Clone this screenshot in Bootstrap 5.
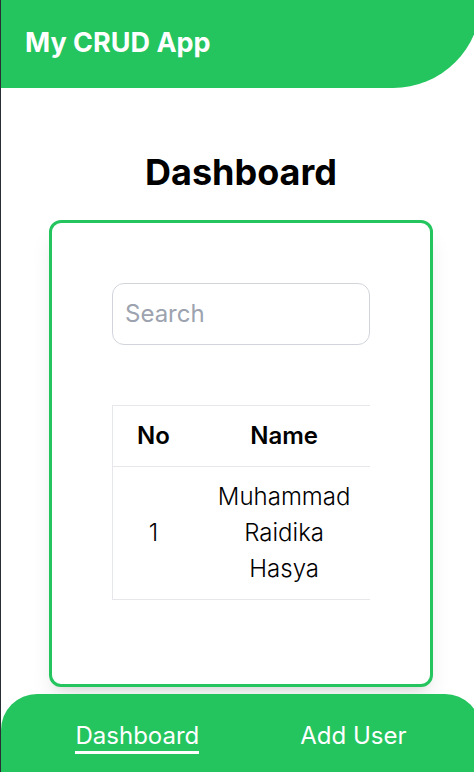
<!DOCTYPE html>
<html lang="en">
<head>
<meta charset="utf-8">
<meta name="viewport" content="width=device-width, initial-scale=1">
<title>My CRUD App</title>
<link href="https://cdn.jsdelivr.net/npm/bootstrap@5.3.0/dist/css/bootstrap.min.css" rel="stylesheet">
<style>
  :root { --brand: #24c55f; }
  body {
    font-family: Inter, "Liberation Sans", sans-serif;
    font-size: 24px;
    line-height: 36px;
    font-weight: 400;
    color: #000;
    background: #fff;
    border-left: 1px solid #282e33;
  }
  /* The shell bleeds slightly past the right edge of the window */
  .shell { margin-right: -7px; }
  .top-bar {
    background: var(--brand);
    padding: 22px 24px 24px;
    border-bottom-right-radius: 88px;
  }
  .brand-name { font-size: 27px; line-height: 42px; font-weight: 700; }
  .content { padding: 64px 48px 7px; }
  .page-title { font-size: 36px; line-height: 40px; font-weight: 700; margin-bottom: 28px; }
  .panel {
    border: 3px solid var(--brand);
    border-radius: 12px;
    padding: 60px 60px 84px;
    background: #fff;
    box-shadow: 0 15px 23px -5px rgba(0, 0, 0, .1), 0 6px 9px -6px rgba(0, 0, 0, .1);
  }
  .search-box {
    font-size: 24px;
    line-height: 36px;
    font-weight: 400;
    padding: 12px;
    border: 1px solid #d1d5db;
    border-radius: 12px;
    margin-bottom: 60px;
  }
  .search-box::placeholder { color: #9ca3af; }
  .users { border-collapse: collapse; border: 1px solid #e5e7eb; }
  .users th, .users td { padding: 12px 24px; }
  .users td { font-weight: 300; }
  .users tr { border-bottom: 1px solid #e5e7eb; }
  .users th { font-weight: 600; }
  .users .name-cell { width: 180px; }
  .bottom-bar {
    background: var(--brand);
    border-radius: 36px 36px 0 0;
    padding: 27px 24px 18px;
  }
  .bottom-bar a { border-bottom: 3px solid transparent; line-height: 30px; }
  .bottom-bar a.active { border-color: #fff; }
</style>
</head>
<body class="overflow-x-hidden min-vh-100">
<div class="shell d-flex flex-column min-vh-100">
  <header class="top-bar text-white">
    <div class="brand-name">My CRUD App</div>
  </header>
  <main class="content flex-grow-1">
    <h1 class="page-title text-center">Dashboard</h1>
    <section class="panel">
      <input type="search" class="search-box form-control" placeholder="Search" aria-label="Search">
      <div class="overflow-hidden">
        <table class="users text-center">
          <thead>
            <tr><th scope="col">No</th><th scope="col" class="name-cell">Name</th></tr>
          </thead>
          <tbody>
            <tr><td>1</td><td class="name-cell">Muhammad Raidika Hasya</td></tr>
          </tbody>
        </table>
      </div>
    </section>
  </main>
  <nav class="bottom-bar sticky-bottom d-flex justify-content-around" aria-label="Main">
    <a href="#dashboard" class="active text-white text-decoration-none" aria-current="page">Dashboard</a>
    <a href="#add-user" class="text-white text-decoration-none">Add User</a>
  </nav>
</div>
<script src="https://cdn.jsdelivr.net/npm/bootstrap@5.3.0/dist/js/bootstrap.bundle.min.js"></script>
</body>
</html>
